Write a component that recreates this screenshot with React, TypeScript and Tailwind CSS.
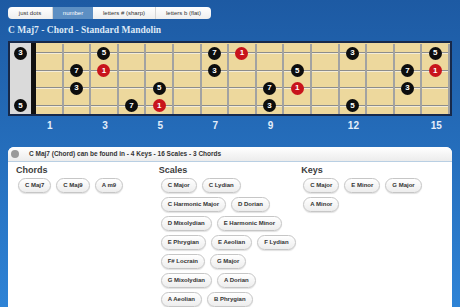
import React from "react";

type Dot = { fret: number; label: string; root?: boolean };

// strings top to bottom, fret 0 = open
const strings: Dot[][] = [
    [
        { fret: 0, label: "3" },
        { fret: 3, label: "5" },
        { fret: 7, label: "7" },
        { fret: 8, label: "1", root: true },
        { fret: 12, label: "3" },
        { fret: 15, label: "5" },
    ],
    [
        { fret: 2, label: "7" },
        { fret: 3, label: "1", root: true },
        { fret: 7, label: "3" },
        { fret: 10, label: "5" },
        { fret: 14, label: "7" },
        { fret: 15, label: "1", root: true },
    ],
    [
        { fret: 2, label: "3" },
        { fret: 5, label: "5" },
        { fret: 9, label: "7" },
        { fret: 10, label: "1", root: true },
        { fret: 14, label: "3" },
    ],
    [
        { fret: 0, label: "5" },
        { fret: 4, label: "7" },
        { fret: 5, label: "1", root: true },
        { fret: 9, label: "3" },
        { fret: 12, label: "5" },
    ],
];

const rowHeights = ["h-[18px]", "h-[17px]", "h-[18px]", "h-[17px]"];
const frets = Array.from({ length: 15 }, (_, i) => i + 1);
const markers = [1, 3, 5, 7, 9, 12, 15];

const tabs = ["just dots", "number", "letters # (sharp)", "letters b (flat)"];
const tabWidths = ["w-[45px]", "w-[40px]", "w-[63px]", "w-[55px]"];

const chords = ["C Maj7", "C Maj9", "A m9"];
const scales = [
    "C Major",
    "C Lydian",
    "C Harmonic Major",
    "D Dorian",
    "D Mixolydian",
    "E Harmonic Minor",
    "E Phrygian",
    "E Aeolian",
    "F Lydian",
    "F# Locrain",
    "G Major",
    "G Mixolydian",
    "A Dorian",
    "A Aeolian",
    "B Phrygian",
];
const keys = ["C Major", "E Minor", "G Major", "A Minor"];

const NoteDot = ({ dot }: { dot: Dot }) => (
    <div
        className={`relative z-10 flex h-[13px] w-[13px] items-center justify-center rounded-full text-[8px] font-bold leading-none text-white ${
            dot.root ? "bg-[#c8141c]" : "bg-[#0d0d0d]"
        }`}
    >
        {dot.label}
    </div>
);

const Pill = ({ label }: { label: string }) => (
    <div className="flex h-[15px] items-center rounded-full border border-[#c6c6c6] bg-linear-to-b from-white to-[#ededed] px-[6px] text-[6px] font-bold text-[#333] shadow-[0_1px_1px_rgba(0,0,0,0.12)]">
        {label}
    </div>
);

const Column = ({ title, items }: { title: string; items: string[] }) => (
    <div>
        <h3 className="mt-[2px] h-[12px] text-[9px] font-bold leading-[12px] text-[#3d3d3d]">
            {title}
        </h3>
        <div className="mt-[2px] flex flex-wrap gap-x-[5px] gap-y-[4px] pl-[2px]">
            {items.map((item) => (
                <Pill key={item} label={item} />
            ))}
        </div>
    </div>
);

export default function App() {
    return (
        <div className="h-[307px] w-[460px] overflow-hidden bg-linear-to-b from-[#1d5aa3] to-[#2e83d6] pt-[7px] font-['Liberation_Sans',Arial,sans-serif]">
            <div className="px-[8px]">
                {/* Display mode tabs */}
                <div className="flex h-[12px] w-[203px] overflow-hidden rounded-[4px] bg-linear-to-b from-white to-[#eeeeee] text-[6px] text-[#333]">
                    {tabs.map((tab, i) => (
                        <div
                            key={tab}
                            className={`flex items-center justify-center ${tabWidths[i]} ${
                                i === 1
                                    ? "bg-[#5d8fc3] text-white"
                                    : "border-r border-[#d4d4d4] last:border-r-0"
                            }`}
                        >
                            {tab}
                        </div>
                    ))}
                </div>

                <h1 className="mt-[5px] font-['Liberation_Serif',serif] text-[9.5px] font-bold leading-[12px] text-[#dde9f6]">
                    C Maj7 - Chord - Standard Mandolin
                </h1>

                {/* Fretboard */}
                <div className="mt-[5px] flex h-[75px] w-[444px] border-2 border-[#17294a]">
                    <div className="w-[21px] bg-[#dadada] pt-[1px]">
                        {strings.map((row, s) => {
                            const open = row.find((d) => d.fret === 0);
                            return (
                                <div
                                    key={s}
                                    className={`flex items-center justify-center ${rowHeights[s]}`}
                                >
                                    {open && <NoteDot dot={open} />}
                                </div>
                            );
                        })}
                    </div>
                    <div className="w-[5px] bg-[#111]" />
                    <div className="flex-1 bg-[#edd89d] pt-[1px]">
                        {strings.map((row, s) => (
                            <div key={s} className={`grid grid-cols-15 ${rowHeights[s]}`}>
                                {frets.map((f) => {
                                    const dot = row.find((d) => d.fret === f);
                                    return (
                                        <div
                                            key={f}
                                            className="relative flex items-center justify-center border-r-2 border-[#a2a2a2]"
                                        >
                                            <div className="absolute inset-x-0 top-1/2 h-[2px] -translate-y-1/2 border-b border-[#f4ecd8] bg-[#8c8c8c]" />
                                            {dot && <NoteDot dot={dot} />}
                                        </div>
                                    );
                                })}
                            </div>
                        ))}
                    </div>
                </div>

                {/* Fret numbers */}
                <div className="ml-[28px] mt-[3px] grid h-[14px] w-[414px] grid-cols-15 text-[10px] font-bold leading-[14px] text-[#e4eefa]">
                    {frets.map((f) => (
                        <div key={f} className="text-center">
                            {markers.includes(f) ? f : ""}
                        </div>
                    ))}
                </div>

                {/* Results panel */}
                <div className="mt-[14px] h-[200px] w-[444px] rounded-t-[6px] bg-white">
                    <div className="flex h-[15px] items-center rounded-t-[6px] border-b border-[#b9cfe3] bg-linear-to-b from-white to-[#ececec] pl-[3px]">
                        <div className="h-[8px] w-[8px] rounded-full bg-[#9a9a9a]" />
                        <span className="ml-[10px] text-[6.5px] font-bold text-[#333]">
                            C Maj7 (Chord) can be found in - 4 Keys - 16 Scales - 3 Chords
                        </span>
                    </div>
                    <div className="grid grid-cols-3 px-[8px]">
                        <Column title="Chords" items={chords} />
                        <Column title="Scales" items={scales} />
                        <Column title="Keys" items={keys} />
                    </div>
                </div>
            </div>
        </div>
    );
}
